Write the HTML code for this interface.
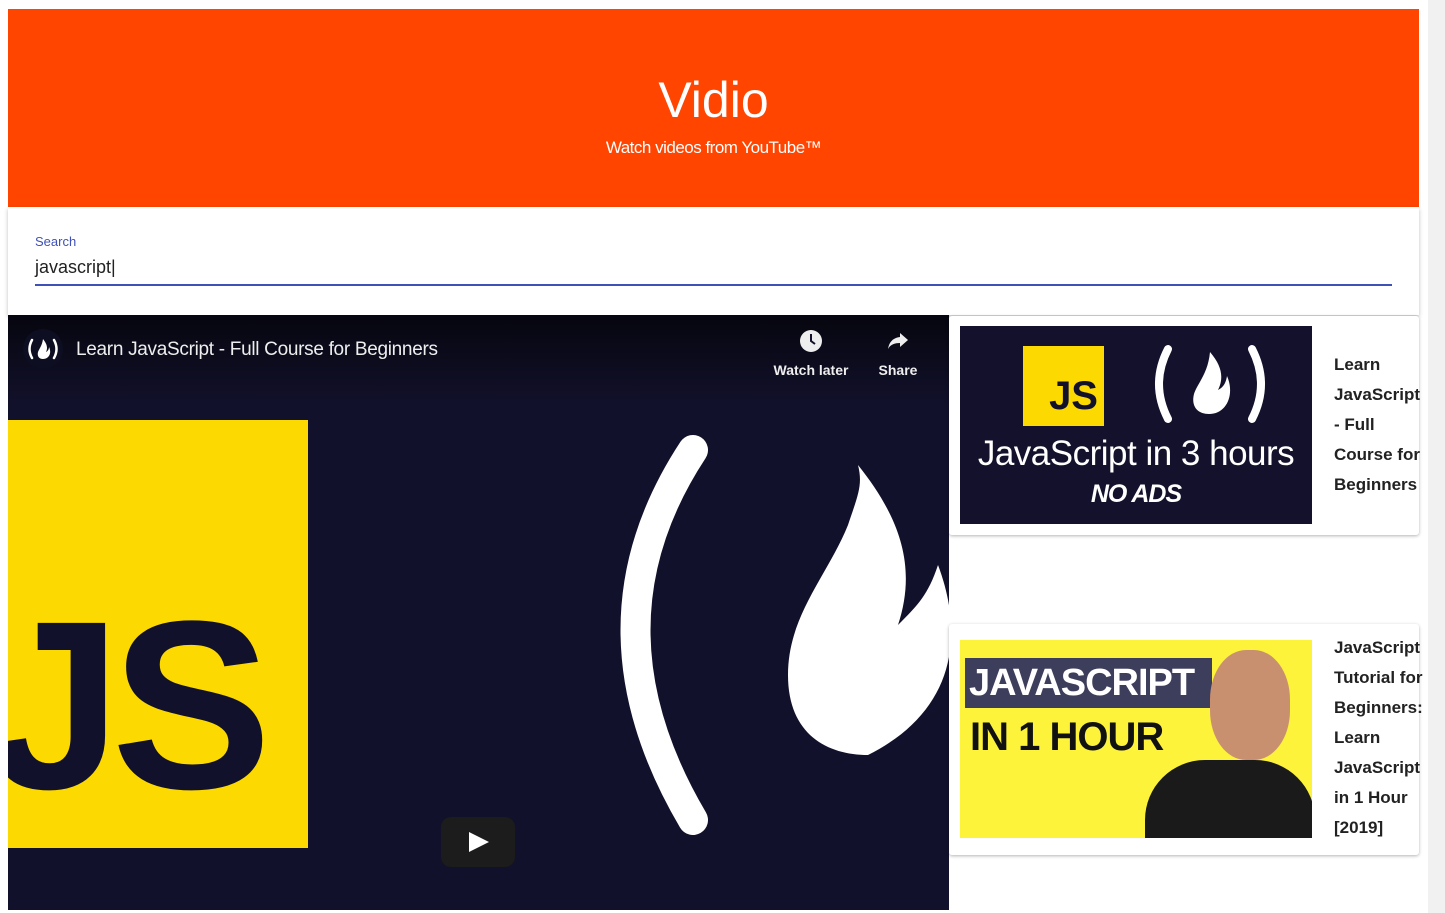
<!DOCTYPE html>
<html><head><style>
html,body{margin:0;padding:0;overflow:hidden;}
body{width:1445px;height:913px;background:#fff;position:relative;font-family:"Liberation Sans",sans-serif;}
.hdr{position:absolute;left:8px;top:9px;width:1411px;height:198px;background:#ff4500;color:#fff;text-align:center;}
.hdr h1{margin:0;position:absolute;top:66px;width:100%;font-size:50px;font-weight:normal;line-height:1;}
.hdr p{margin:0;position:absolute;top:129px;width:100%;font-size:17px;letter-spacing:-0.5px;}
.srch{position:absolute;left:8px;top:207px;width:1411px;height:108px;background:#fff;box-shadow:0 2px 4px rgba(0,0,0,.25);}
.lbl{position:absolute;left:27px;top:27px;font-size:13px;color:#3f51b5;}
.inp{position:absolute;left:27px;top:50px;font-size:18px;color:#222;}
.line{position:absolute;left:27px;top:77px;width:1357px;height:2px;background:#3f51b5;}
.vid{position:absolute;left:8px;top:315px;width:941px;height:595px;background:#12112b;overflow:hidden;}
.card{position:absolute;left:949px;width:470px;background:#fff;box-shadow:0 1px 3px rgba(0,0,0,.3);border-radius:3px;}
.ctext{position:absolute;left:385px;font-weight:bold;font-size:17px;line-height:30px;color:#222;width:92px;}
.sb{position:absolute;left:1428px;top:0;width:17px;height:913px;background:#f1f1f1;}
.thumb{position:absolute;left:1430px;top:16px;width:13px;height:427px;background:#c1c1c1;}
</style></head><body>
<div class="hdr"><h1>Vidio</h1><p>Watch videos from YouTube™</p></div>
<div class="srch"><div class="lbl">Search</div><div class="inp">javascript|</div><div class="line"></div></div>
<div class="vid">
 <div style="position:absolute;left:0;top:0;width:941px;height:90px;background:linear-gradient(#06060f,rgba(18,17,43,0));"></div>
 <div style="position:absolute;left:15px;top:14px;width:40px;height:40px;border-radius:50%;background:#0e0e22;"><svg width="40" height="40" viewBox="0 0 40 40"><path d="M9 11q-5 9 0 18M31 11q5 9 0 18" stroke="#fff" stroke-width="2.5" fill="none" stroke-linecap="round"/><path d="M20 10c4 5 5 9 3 13 2-1 3-3 3-5 3 6 0 12-6 12-4 0-6-3-5-7 1-3 4-6 5-13z" fill="#fff"/></svg></div>
 <div style="position:absolute;left:68px;top:24px;color:#eee;font-size:19px;letter-spacing:-0.3px;">Learn JavaScript - Full Course for Beginners</div>
 <div style="position:absolute;left:763px;top:14px;width:80px;text-align:center;color:#eee;font-size:14px;font-weight:bold;line-height:22px;"><svg width="24" height="24" viewBox="0 0 24 24"><circle cx="12" cy="12" r="11" fill="#eee"/><path d="M12 5v7l4 3" stroke="#12112b" stroke-width="2" fill="none"/></svg><br>Watch later</div>
 <div style="position:absolute;left:860px;top:14px;width:60px;text-align:center;color:#eee;font-size:14px;font-weight:bold;line-height:22px;"><svg width="24" height="24" viewBox="0 0 24 24"><path d="M14 4l8 7-8 7v-4c-6 0-10 2-12 6 1-6 4-11 12-12z" fill="#eee"/></svg><br>Share</div>
 <div style="position:absolute;left:0;top:105px;width:300px;height:428px;background:#fcd900;"></div>
 <div style="position:absolute;left:-20px;top:270px;font-size:240px;font-weight:bold;color:#12112b;letter-spacing:-10px;line-height:1;">JS</div>
 <svg style="position:absolute;left:580px;top:120px" width="120" height="400" viewBox="0 0 120 400"><path d="M105 15Q-10 190 105 385" stroke="#fff" stroke-width="30" fill="none" stroke-linecap="round"/></svg>
 <svg style="position:absolute;left:760px;top:140px" width="190" height="350" viewBox="0 0 190 350"><path d="M90 10c40 50 60 100 40 160 20-20 30-30 40-60 30 80 10 150-70 190-40 0-80-20-80-80 0-60 40-100 60-150 10-30 15-40 10-60z" fill="#fff"/></svg>
 <div style="position:absolute;left:433px;top:502px;width:74px;height:50px;border-radius:10px;background:#1c1c1c;"><svg style="position:absolute;left:28px;top:15px" width="20" height="20" viewBox="0 0 20 20"><path d="M0 0l20 10-20 10z" fill="#fff"/></svg></div>
</div>
<div class="card" style="top:316px;height:219px;">
 <div style="position:absolute;left:11px;top:10px;width:352px;height:198px;background:#13112b;overflow:hidden;color:#fff;">
  <div style="position:absolute;left:63px;top:20px;width:81px;height:80px;background:#fcd900;color:#12112b;font-weight:bold;font-size:40px;text-align:right;line-height:120px;"><span style="position:relative;top:-10px;right:6px;">JS</span></div>
  <svg style="position:absolute;left:190px;top:18px" width="120" height="80" viewBox="0 0 120 80"><path d="M18 5q-18 35 0 70M102 5q18 35 0 70" stroke="#fff" stroke-width="8" fill="none" stroke-linecap="round"/><path d="M60 8c12 14 14 26 8 38 6-3 8-8 9-14 8 18 0 38-18 38-12 0-18-8-15-20 3-10 14-20 16-42z" fill="#fff"/></svg>
  <div style="position:absolute;left:0;width:352px;top:110px;text-align:center;font-size:35px;line-height:1;letter-spacing:-0.5px;">JavaScript in 3 hours</div>
  <div style="position:absolute;left:0;width:352px;top:154px;text-align:center;font-size:25px;font-weight:bold;font-style:italic;letter-spacing:-1px;">NO ADS</div>
 </div>
 <div class="ctext" style="top:34px;">Learn JavaScript - Full Course for Beginners</div>
</div>
<div class="card" style="top:624px;height:231px;">
 <div style="position:absolute;left:11px;top:16px;width:352px;height:198px;background:#fcf33a;overflow:hidden;">
  <div style="position:absolute;left:5px;top:18px;width:243px;height:50px;background:#3d3d5c;color:#fff;font-size:38px;font-weight:bold;line-height:50px;padding-left:4px;letter-spacing:-1px;">JAVASCRIPT</div>
  <div style="position:absolute;left:10px;top:75px;color:#111;font-size:40px;font-weight:bold;letter-spacing:-1px;">IN 1 HOUR</div>
  <div style="position:absolute;left:250px;top:10px;width:80px;height:110px;border-radius:45%;background:#c99070;"></div>
  <div style="position:absolute;left:185px;top:120px;width:170px;height:100px;border-radius:60px 60px 0 0;background:#1a1a1a;"></div>
 </div>
 <div class="ctext" style="top:9px;">JavaScript Tutorial for Beginners: Learn JavaScript in 1 Hour [2019]</div>
</div>
<div class="sb"><div class="thumb"></div></div>
</body></html>
